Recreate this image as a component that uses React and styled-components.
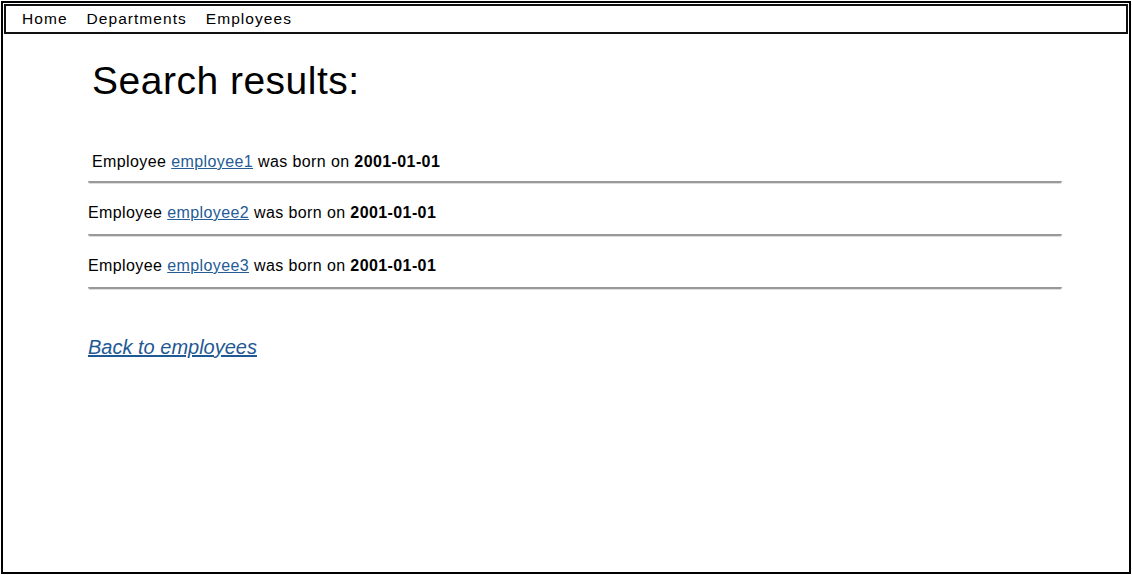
import styled, { createGlobalStyle } from 'styled-components';

const GlobalStyle = createGlobalStyle`
  html, body {
    margin: 0;
    padding: 0;
    background: #fff;
  }
  body {
    font-family: "Liberation Sans", Arial, sans-serif;
    color: #000;
  }
`;

const employees = [
  { name: 'employee1', born: '2001-01-01', indent: 4 },
  { name: 'employee2', born: '2001-01-01', indent: 0 },
  { name: 'employee3', born: '2001-01-01', indent: 0 },
];

export default function App() {
  return (
    <>
      <GlobalStyle />
      <Frame>
        <NavBar>
          <NavLink>Home</NavLink>
          <NavLink>Departments</NavLink>
          <NavLink>Employees</NavLink>
        </NavBar>
        <Content>
          <Title>Search results:</Title>
          <ResultList>
            {employees.map((e) => (
              <ResultRow key={e.name} $indent={e.indent}>
                Employee <EmployeeLink href="#">{e.name}</EmployeeLink> was born on{' '}
                <strong>{e.born}</strong>
              </ResultRow>
            ))}
          </ResultList>
          <BackLink href="#">Back to employees</BackLink>
        </Content>
      </Frame>
    </>
  );
}

const Frame = styled.div`
  box-sizing: border-box;
  margin: 1px 1px 0 1px;
  height: 573px;
  border: 2.5px solid #000;
  padding: 1px;
  display: flex;
  flex-direction: column;
`;

const NavBar = styled.nav`
  box-sizing: border-box;
  height: 30px;
  border: 2px solid #111;
  display: flex;
  align-items: center;
  padding: 0 0 1px 16px;
  gap: 19px;
`;

const NavLink = styled.span`
  font-size: 15.5px;
  letter-spacing: 1.05px;
  color: #000;
`;

const Content = styled.main`
  padding: 22px 0 0 84px;
  width: 974px;
`;

const Title = styled.h1`
  margin: 0 0 0 4px;
  font-size: 39px;
  font-weight: normal;
  line-height: 50px;
  letter-spacing: 0.5px;
`;

const ResultList = styled.ul`
  list-style: none;
  margin: 44px 0 0 0;
  padding: 0;
`;

const ResultRow = styled.li`
  font-size: 16px;
  line-height: 20px;
  padding: 2px 0 9px ${(p) => p.$indent}px;
  margin-bottom: 20px;
  border-bottom: 2px solid #999;
  border-radius: 0 0 2px 2px;
  box-shadow: 0 1px 0 #ddd;
  letter-spacing: 0.4px;

  & + & {
    padding-top: 0;
    padding-bottom: 11px;
  }

  strong {
    font-weight: bold;
  }
`;

const EmployeeLink = styled.a`
  color: #255c96;
  text-decoration: underline;
`;

const BackLink = styled.a`
  display: inline-block;
  margin-top: 27px;
  font-size: 20px;
  font-style: italic;
  color: #1f5894;
  text-decoration: underline;
`;
